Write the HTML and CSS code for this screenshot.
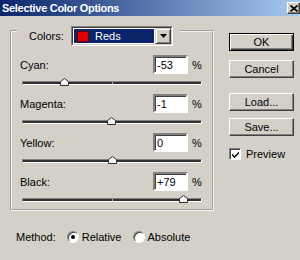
FILE: index.html
```html
<!DOCTYPE html>
<html lang="en">
<head>
    <meta charset="UTF-8">
    <title>Selective Color Options</title>
    <link rel="stylesheet" href="styles.css">
</head>
<body>
<div class="window">
    <div class="titlebar">
        <span class="title">Selective Color Options</span>
        <span class="close-btn">
            <svg width="8" height="7" viewBox="0 0 8 7"><path d="M0.5 0.5 L7.5 6.5 M7.5 0.5 L0.5 6.5" stroke="#000" stroke-width="1.6"/></svg>
        </span>
    </div>

    <div class="content">
        <div class="main">
            <fieldset class="group">
                <legend class="legend">
                    <span class="legend-label">Colors:</span>
                    <span class="dropdown">
                        <span class="dropdown-inner">
                            <span class="selected"><span class="swatch"></span>Reds</span>
                            <span class="dropdown-arrow">
                                <svg width="7" height="4" viewBox="0 0 7 4"><path d="M0 0h7L3.5 4z" fill="#000"/></svg>
                            </span>
                        </span>
                    </span>
                </legend>

                <div class="channel">
                    <div class="channel-row">
                        <span class="channel-name">Cyan:</span>
                        <span class="field">-53</span>
                        <span class="pct">%</span>
                    </div>
                    <div class="slider">
                        <div class="track"></div>
                        <svg class="thumb" style="left: calc(23.5% - 4px)" width="9" height="8" viewBox="0 0 9 8"><path d="M0.5 7.5V3.5L4.5 0.5L8.5 3.5V7.5Z" fill="#f4f4f4" stroke="#303030"/></svg>
                    </div>
                </div>

                <div class="channel">
                    <div class="channel-row">
                        <span class="channel-name">Magenta:</span>
                        <span class="field">-1</span>
                        <span class="pct">%</span>
                    </div>
                    <div class="slider">
                        <div class="track"></div>
                        <svg class="thumb" style="left: calc(49.5% - 4px)" width="9" height="8" viewBox="0 0 9 8"><path d="M0.5 7.5V3.5L4.5 0.5L8.5 3.5V7.5Z" fill="#f4f4f4" stroke="#303030"/></svg>
                    </div>
                </div>

                <div class="channel">
                    <div class="channel-row">
                        <span class="channel-name">Yellow:</span>
                        <span class="field">0</span>
                        <span class="pct">%</span>
                    </div>
                    <div class="slider">
                        <div class="track"></div>
                        <svg class="thumb" style="left: calc(50% - 4px)" width="9" height="8" viewBox="0 0 9 8"><path d="M0.5 7.5V3.5L4.5 0.5L8.5 3.5V7.5Z" fill="#f4f4f4" stroke="#303030"/></svg>
                    </div>
                </div>

                <div class="channel">
                    <div class="channel-row">
                        <span class="channel-name">Black:</span>
                        <span class="field">+79</span>
                        <span class="pct">%</span>
                    </div>
                    <div class="slider">
                        <div class="track"></div>
                        <svg class="thumb" style="left: calc(89.5% - 4px)" width="9" height="8" viewBox="0 0 9 8"><path d="M0.5 7.5V3.5L4.5 0.5L8.5 3.5V7.5Z" fill="#f4f4f4" stroke="#303030"/></svg>
                    </div>
                </div>
            </fieldset>

            <div class="method">
                <span class="method-label">Method:</span>
                <span class="radio checked"></span>
                <span class="radio-label">Relative</span>
                <span class="radio"></span>
                <span class="radio-label">Absolute</span>
            </div>
        </div>

        <div class="actions">
            <span class="btn btn-default">OK</span>
            <span class="btn btn-cancel">Cancel</span>
            <span class="btn btn-load">Load...</span>
            <span class="btn btn-save">Save...</span>
            <span class="preview">
                <span class="checkbox">
                    <svg width="7" height="7" viewBox="0 0 7 7"><path d="M0 2.5L2.5 5L7 0.5V2.5L2.5 7L0 4.5Z" fill="#000"/></svg>
                </span>
                Preview
            </span>
        </div>
    </div>
</div>
</body>
</html>
```

FILE: styles.css
```css
* {
    margin: 0;
    padding: 0;
    box-sizing: border-box;
}

body {
    background: #d4d0c8;
    font-family: "Liberation Sans", Arial, sans-serif;
    font-size: 11px;
    color: #000;
}

.window {
    width: 300px;
    height: 260px;
    display: flex;
    flex-direction: column;
    overflow: hidden;
}

/* title bar */
.titlebar {
    height: 16px;
    flex: none;
    display: flex;
    align-items: center;
    justify-content: space-between;
    padding-left: 2px;
    background: linear-gradient(to right, #0a246a, #a6caf0);
}

.title {
    color: #fff;
    font-weight: bold;
    font-size: 11px;
    letter-spacing: -0.3px;
}

.close-btn {
    width: 13px;
    height: 12px;
    display: flex;
    align-items: center;
    justify-content: center;
    background: #d4d0c8;
    border: 1px solid;
    border-color: #fff #404040 #404040 #fff;
    box-shadow: inset -1px -1px 0 #808080;
}

.content {
    display: flex;
    padding-left: 10px;
    gap: 15px;
}

.main {
    width: 204px;
}

/* group box */
.group {
    border: 2px groove #f4f4f4;
    padding: 9px 10px 5px 8px;
}

.legend {
    margin-left: -3px;
    padding: 10px 7px 0 12px;
    display: flex;
    align-items: center;
}

.legend-label {
    width: 42px;
}

.dropdown {
    width: 102px;
    height: 20px;
    display: flex;
    border: 1px solid;
    border-color: #808080 #fff #fff #808080;
}

.dropdown-inner {
    flex: 1;
    display: flex;
    background: #fff;
    border: 1px solid;
    border-color: #404040 #d4d0c8 #d4d0c8 #404040;
}

.selected {
    flex: 1;
    margin: 1px;
    display: flex;
    align-items: center;
    gap: 6px;
    padding-left: 3px;
    background: #0a246a;
    color: #fff;
}

.swatch {
    width: 12px;
    height: 11px;
    background: #e00000;
    border: 1px solid #700000;
}

.dropdown-arrow {
    width: 16px;
    display: flex;
    align-items: center;
    justify-content: center;
    background: #d4d0c8;
    border: 1px solid;
    border-color: #d4d0c8 #404040 #404040 #d4d0c8;
    box-shadow: inset 1px 1px 0 #fff, inset -1px -1px 0 #808080;
}

/* channel rows */
.channel + .channel {
    margin-top: 7px;
}

.channel-row {
    height: 19px;
    display: flex;
    align-items: center;
}

.channel-name {
    flex: 1;
}

.field {
    width: 35px;
    height: 19px;
    display: flex;
    align-items: center;
    padding-left: 2px;
    background: #fff;
    border: 2px solid;
    border-color: #808080 #fff #fff #808080;
    box-shadow: inset 1px 1px 0 #404040;
}

.pct {
    width: 10px;
    margin-left: 4px;
}

.slider {
    position: relative;
    height: 13px;
    margin-left: 2px;
    padding-top: 7px;
}

.track {
    position: relative;
    height: 4px;
    background: #303030;
    border: 1px solid;
    border-color: #808080 #fff #fff #808080;
}

.track::after {
    content: "";
    position: absolute;
    left: 50%;
    top: 0;
    width: 1px;
    height: 2px;
    background: #b0b0b0;
}

.thumb {
    position: absolute;
    top: 4px;
    display: block;
}

/* method row */
.method {
    margin-top: 19px;
    padding-left: 6px;
    height: 14px;
    display: flex;
    align-items: center;
}

.method-label {
    margin-right: 11px;
}

.radio {
    width: 12px;
    height: 12px;
    border-radius: 50%;
    background: #fff;
    border: 1px solid;
    border-color: #808080 #fff #fff #808080;
    box-shadow: inset 1px 1px 0 #404040;
    display: flex;
    align-items: center;
    justify-content: center;
    margin-right: 3px;
}

.radio.checked::after {
    content: "";
    width: 4px;
    height: 4px;
    border-radius: 50%;
    background: #000;
}

.radio-label {
    margin-right: 11px;
}

/* buttons */
.actions {
    width: 65px;
    padding-top: 17px;
    display: flex;
    flex-direction: column;
}

.btn {
    height: 18px;
    display: flex;
    align-items: center;
    justify-content: center;
    border: 1px solid;
    border-color: #fff #404040 #404040 #fff;
    box-shadow: inset -1px -1px 0 #808080;
}

.btn-default {
    border-color: #000;
    box-shadow: inset 1px 1px 0 #fff, inset -1px -1px 0 #404040, inset -2px -2px 0 #808080;
}

.btn-cancel {
    margin-top: 9px;
}

.btn-load {
    margin-top: 15px;
}

.btn-save {
    margin-top: 7px;
}

.preview {
    margin-top: 12px;
    display: flex;
    align-items: center;
    gap: 5px;
}

.checkbox {
    width: 12px;
    height: 12px;
    display: flex;
    align-items: center;
    justify-content: center;
    background: #fff;
    border: 1px solid;
    border-color: #808080 #fff #fff #808080;
    box-shadow: inset 1px 1px 0 #404040;
}
```
